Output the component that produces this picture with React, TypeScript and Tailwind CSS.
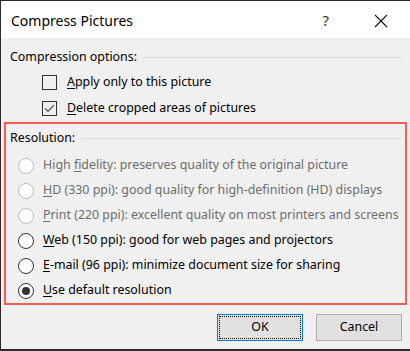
import { ReactNode } from 'react'

const font = { fontFamily: '"Segoe UI", "Noto Sans", "Open Sans", sans-serif' }

// underline the access key letter
function Label({ text, k }: { text: string; k: number }) {
  return (
    <span className="whitespace-nowrap">
      {text.slice(0, k)}
      <span className="underline underline-offset-2">{text[k]}</span>
      {text.slice(k + 1)}
    </span>
  )
}

function Group({ title, children }: { title: string; children: ReactNode }) {
  return (
    <div>
      <div className="flex h-[18px] items-center gap-[6px]">
        <span className="whitespace-nowrap text-[12.4px] text-black">{title}</span>
        <div className="h-px flex-1 bg-[#dadada]" />
      </div>
      {children}
    </div>
  )
}

function Checkbox({ checked, label }: { checked?: boolean; label: ReactNode }) {
  return (
    <div className="flex h-[26px] items-center gap-[10px] pl-[32px] text-[12.4px] text-black">
      <div className="flex h-[15px] w-[15px] items-center justify-center border border-[#333333] bg-[#f0f0f0]">
        {checked && (
          <svg width="11" height="9" viewBox="0 0 11 9" fill="none">
            <path d="M1 4.5 L4 7.5 L10 1" stroke="#555555" strokeWidth="1.2" />
          </svg>
        )}
      </div>
      {label}
    </div>
  )
}

function Radio({ selected, disabled, label }: { selected?: boolean; disabled?: boolean; label: ReactNode }) {
  return (
    <div
      className={`flex h-[25px] items-center gap-[9px] pl-[8px] text-[12.4px] ${
        disabled ? 'text-[#6d6d6d]' : 'text-black'
      }`}
    >
      <div
        className={`flex h-[16px] w-[16px] shrink-0 items-center justify-center rounded-full border bg-white ${
          disabled ? 'border-[#bcbcbc]' : 'border-[#333333]'
        }`}
      >
        {selected && <div className="h-[8px] w-[8px] rounded-full bg-[#333333]" />}
      </div>
      {label}
    </div>
  )
}

export default function App() {
  return (
    <div className="h-[351px] w-[410px] bg-[#2b2b2b] pt-px pl-px pb-[2px]" style={font}>
      <div className="flex h-full flex-col bg-[#f0f0f0]">
        {/* title bar */}
        <div className="flex h-[37px] items-center bg-white pt-[2px] pl-[10px] pr-[22px]">
          <span className="flex-1 text-[14px] text-black">Compress Pictures</span>
          <span className="mr-[45px] text-[15px] text-[#333]">?</span>
          <svg width="14" height="14" viewBox="0 0 14 14">
            <path d="M1 1 L13 13 M13 1 L1 13" stroke="#111" strokeWidth="1.1" />
          </svg>
        </div>

        <div className="px-[9px] pt-[10px] pr-[8px]">
          <Group title="Compression options:">
            <div className="pt-[3px]">
              <Checkbox label={<Label text="Apply only to this picture" k={0} />} />
              <Checkbox checked label={<Label text="Delete cropped areas of pictures" k={0} />} />
            </div>
          </Group>
        </div>

        <div className="mx-[3px] mt-px border-2 border-[#ff5a4f] px-[4px] pt-[5px] pb-0">
          <Group title="Resolution:">
            <div className="mt-[6px]">
              <Radio disabled label={<Label text="High fidelity: preserves quality of the original picture" k={5} />} />
              <Radio disabled label={<Label text="HD (330 ppi): good quality for high-definition (HD) displays" k={0} />} />
              <Radio disabled label={<Label text="Print (220 ppi): excellent quality on most printers and screens" k={0} />} />
              <Radio label={<Label text="Web (150 ppi): good for web pages and projectors" k={0} />} />
              <Radio label={<Label text="E-mail (96 ppi): minimize document size for sharing" k={0} />} />
              <Radio selected label={<Label text="Use default resolution" k={0} />} />
            </div>
          </Group>
        </div>

        <div className="mt-[9px] flex justify-end gap-[13px] pr-[8px]">
          <button className="flex h-[27px] w-[86px] items-center justify-center border border-[#0078d7] bg-[#e1e1e1] p-px text-[12.4px] text-black">
            <span className="flex h-full w-full items-center justify-center outline-1 outline-dotted outline-offset-[-1px] outline-black">
              OK
            </span>
          </button>
          <button className="h-[27px] w-[86px] border border-[#adadad] bg-[#e1e1e1] text-[12.4px] text-black">
            Cancel
          </button>
        </div>
      </div>
    </div>
  )
}
